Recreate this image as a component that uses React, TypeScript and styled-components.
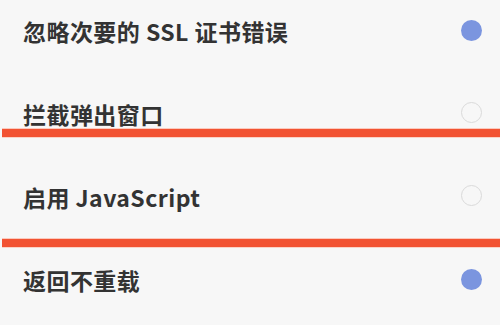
import React from 'react';
import styled, { createGlobalStyle } from 'styled-components';

const GlobalStyle = createGlobalStyle`
  html, body {
    margin: 0;
    padding: 0;
    background: #f7f7f7;
    overflow: hidden;
  }
`;

const Screen = styled.div`
  position: relative;
  width: 500px;
  height: 325px;
  overflow: hidden;
  background: #f7f7f7;
  font-family: 'Noto Sans CJK SC', 'Noto Sans', sans-serif;
`;

const List = styled.ul`
  list-style: none;
  margin: -10.5px 0 0;
  padding: 0;
`;

const Row = styled.li`
  display: flex;
  align-items: center;
  justify-content: space-between;
  height: 83px;
  padding: 0 18px 0 23px;
`;

const Label = styled.span`
  font-size: 23px;
  font-weight: 700;
  color: #333333;
  letter-spacing: 0.45px;
`;

const Radio = styled.span<{ checked: boolean }>`
  width: 21px;
  height: 21px;
  border-radius: 50%;
  box-sizing: border-box;
  margin-top: ${({ checked }) => (checked ? '-2px' : '-3px')};
  background: ${({ checked }) => (checked ? '#7b95df' : 'transparent')};
  border: ${({ checked }) => (checked ? 'none' : '1.5px solid #dadada')};
`;

const Marker = styled.div<{ top: number }>`
  position: absolute;
  left: 2px;
  right: 0;
  top: ${({ top }) => top}px;
  height: 8px;
  background: #f25333;
  box-shadow: 0 -1px 0 #fbc9bd, 0 1px 0 #fbd3c8;
`;

const settings = [
  { label: '忽略次要的 SSL 证书错误', checked: true },
  { label: '拦截弹出窗口', checked: false },
  { label: '启用 JavaScript', checked: false },
  { label: '返回不重载', checked: true },
];

const App = () => (
  <>
    <GlobalStyle />
    <Screen>
      <List>
        {settings.map((s) => (
          <Row key={s.label}>
            <Label>{s.label}</Label>
            <Radio checked={s.checked} />
          </Row>
        ))}
      </List>
      <Marker top={129} />
      <Marker top={239} />
    </Screen>
  </>
);

export default App;
